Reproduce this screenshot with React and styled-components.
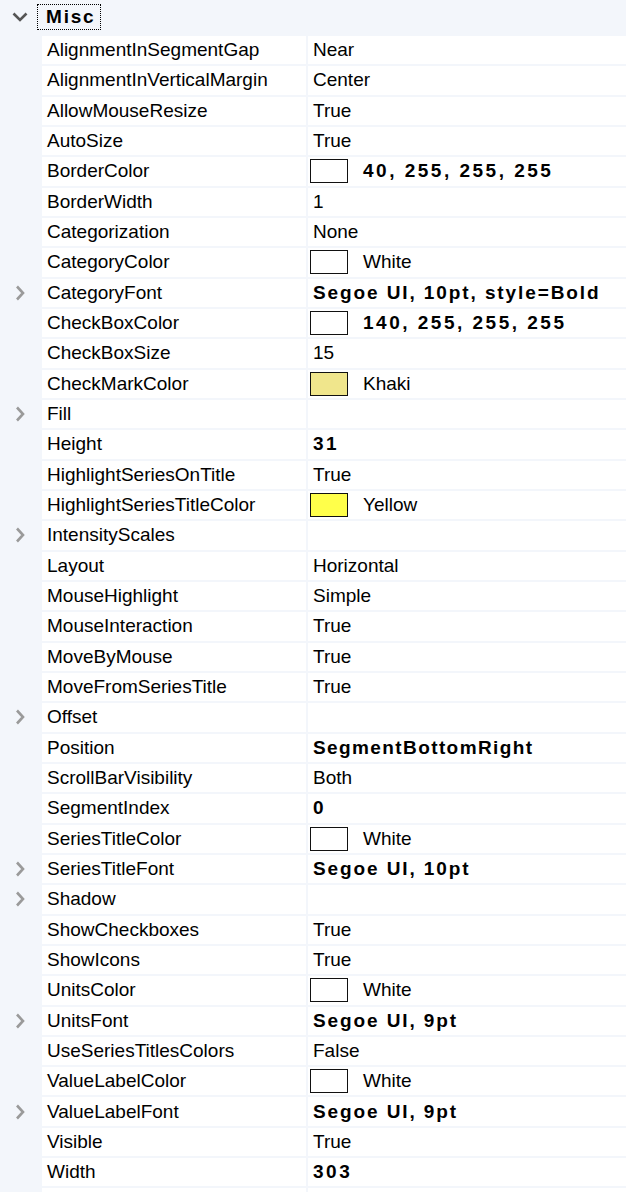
import React from "react";
import styled, { createGlobalStyle } from "styled-components";

const Global = createGlobalStyle`
  html, body { margin: 0; padding: 0; background: #f3f6fb; }
  body { font-family: "Liberation Sans", Arial, sans-serif; color: #000; }
`;

const Grid = styled.div`
  width: 626px;
  display: flex;
  flex-direction: column;
  gap: 2px;
  background: #f3f6fb;
`;

const Header = styled.div`
  height: 34px;
  display: flex;
  align-items: center;
`;

const Toggle = styled.div`
  width: 40px;
  height: 100%;
  display: flex;
  align-items: center;
  justify-content: center;
  flex: none;
`;

const CategoryTitle = styled.div`
  height: 26px;
  margin-left: -3px;
  padding: 0 5px 0 8px;
  border: 1.5px dotted #000;
  box-sizing: border-box;
  display: flex;
  align-items: center;
  font-weight: 700;
  font-size: 19px;
  letter-spacing: 1.8px;
`;

const Row = styled.div`
  height: 28.33px;
  display: grid;
  grid-template-columns: 40px 264px 320px;
  column-gap: 2px;
`;

const Cell = styled.div`
  background: #fff;
  display: flex;
  align-items: center;
  font-size: 19px;
  white-space: nowrap;
  overflow: hidden;
`;

const NameCell = styled(Cell)`
  padding-left: 5px;
`;

const ValueCell = styled(Cell)`
  padding-left: ${(p) => (p.$swatch ? "2px" : "5px")};
  font-weight: ${(p) => (p.$bold ? 700 : 400)};
  letter-spacing: ${(p) => p.$tracking || 0}px;
`;

const Swatch = styled.span`
  width: 38px;
  height: 24px;
  box-sizing: border-box;
  border: 1.5px solid #111;
  background: ${(p) => p.$color};
  margin-right: 15px;
  flex: none;
`;

const Chevron = ({ down }) =>
  down ? (
    <svg width="16" height="10" viewBox="0 0 16 10">
      <path d="M1.5 1.5 L8 8 L14.5 1.5" fill="none" stroke="#555" strokeWidth="2.6" />
    </svg>
  ) : (
    <svg width="10" height="16" viewBox="0 0 10 16">
      <path d="M2 1.5 L8 8 L2 14.5" fill="none" stroke="#9a9a9a" strokeWidth="2.6" />
    </svg>
  );

const rows = [
  ["AlignmentInSegmentGap", "Near"],
  ["AlignmentInVerticalMargin", "Center"],
  ["AllowMouseResize", "True"],
  ["AutoSize", "True"],
  ["BorderColor", "40, 255, 255, 255", { bold: 2.5, swatch: "#fff" }],
  ["BorderWidth", "1"],
  ["Categorization", "None"],
  ["CategoryColor", "White", { swatch: "#fff" }],
  ["CategoryFont", "Segoe UI, 10pt, style=Bold", { bold: 1.9, expand: true }],
  ["CheckBoxColor", "140, 255, 255, 255", { bold: 2.5, swatch: "#fff" }],
  ["CheckBoxSize", "15"],
  ["CheckMarkColor", "Khaki", { swatch: "#f0e68c" }],
  ["Fill", "", { expand: true }],
  ["Height", "31", { bold: 2.5 }],
  ["HighlightSeriesOnTitle", "True"],
  ["HighlightSeriesTitleColor", "Yellow", { swatch: "#ffff4a" }],
  ["IntensityScales", "", { expand: true }],
  ["Layout", "Horizontal"],
  ["MouseHighlight", "Simple"],
  ["MouseInteraction", "True"],
  ["MoveByMouse", "True"],
  ["MoveFromSeriesTitle", "True"],
  ["Offset", "", { expand: true }],
  ["Position", "SegmentBottomRight", { bold: 1.4 }],
  ["ScrollBarVisibility", "Both"],
  ["SegmentIndex", "0", { bold: 2.5 }],
  ["SeriesTitleColor", "White", { swatch: "#fff" }],
  ["SeriesTitleFont", "Segoe UI, 10pt", { bold: 1.9, expand: true }],
  ["Shadow", "", { expand: true }],
  ["ShowCheckboxes", "True"],
  ["ShowIcons", "True"],
  ["UnitsColor", "White", { swatch: "#fff" }],
  ["UnitsFont", "Segoe UI, 9pt", { bold: 1.9, expand: true }],
  ["UseSeriesTitlesColors", "False"],
  ["ValueLabelColor", "White", { swatch: "#fff" }],
  ["ValueLabelFont", "Segoe UI, 9pt", { bold: 1.9, expand: true }],
  ["Visible", "True"],
  ["Width", "303", { bold: 2.5 }],
];

export default function App() {
  return (
    <>
      <Global />
      <Grid>
        <Header>
          <Toggle>
            <Chevron down />
          </Toggle>
          <CategoryTitle>Misc</CategoryTitle>
        </Header>
        {rows.map(([name, value, opt = {}]) => (
          <Row key={name}>
            <Toggle>{opt.expand && <Chevron />}</Toggle>
            <NameCell>{name}</NameCell>
            <ValueCell $bold={!!opt.bold} $tracking={opt.bold} $swatch={!!opt.swatch}>
              {opt.swatch && <Swatch $color={opt.swatch} />}
              {value}
            </ValueCell>
          </Row>
        ))}
        <Row>
          <Toggle />
          <NameCell />
          <ValueCell />
        </Row>
      </Grid>
    </>
  );
}
